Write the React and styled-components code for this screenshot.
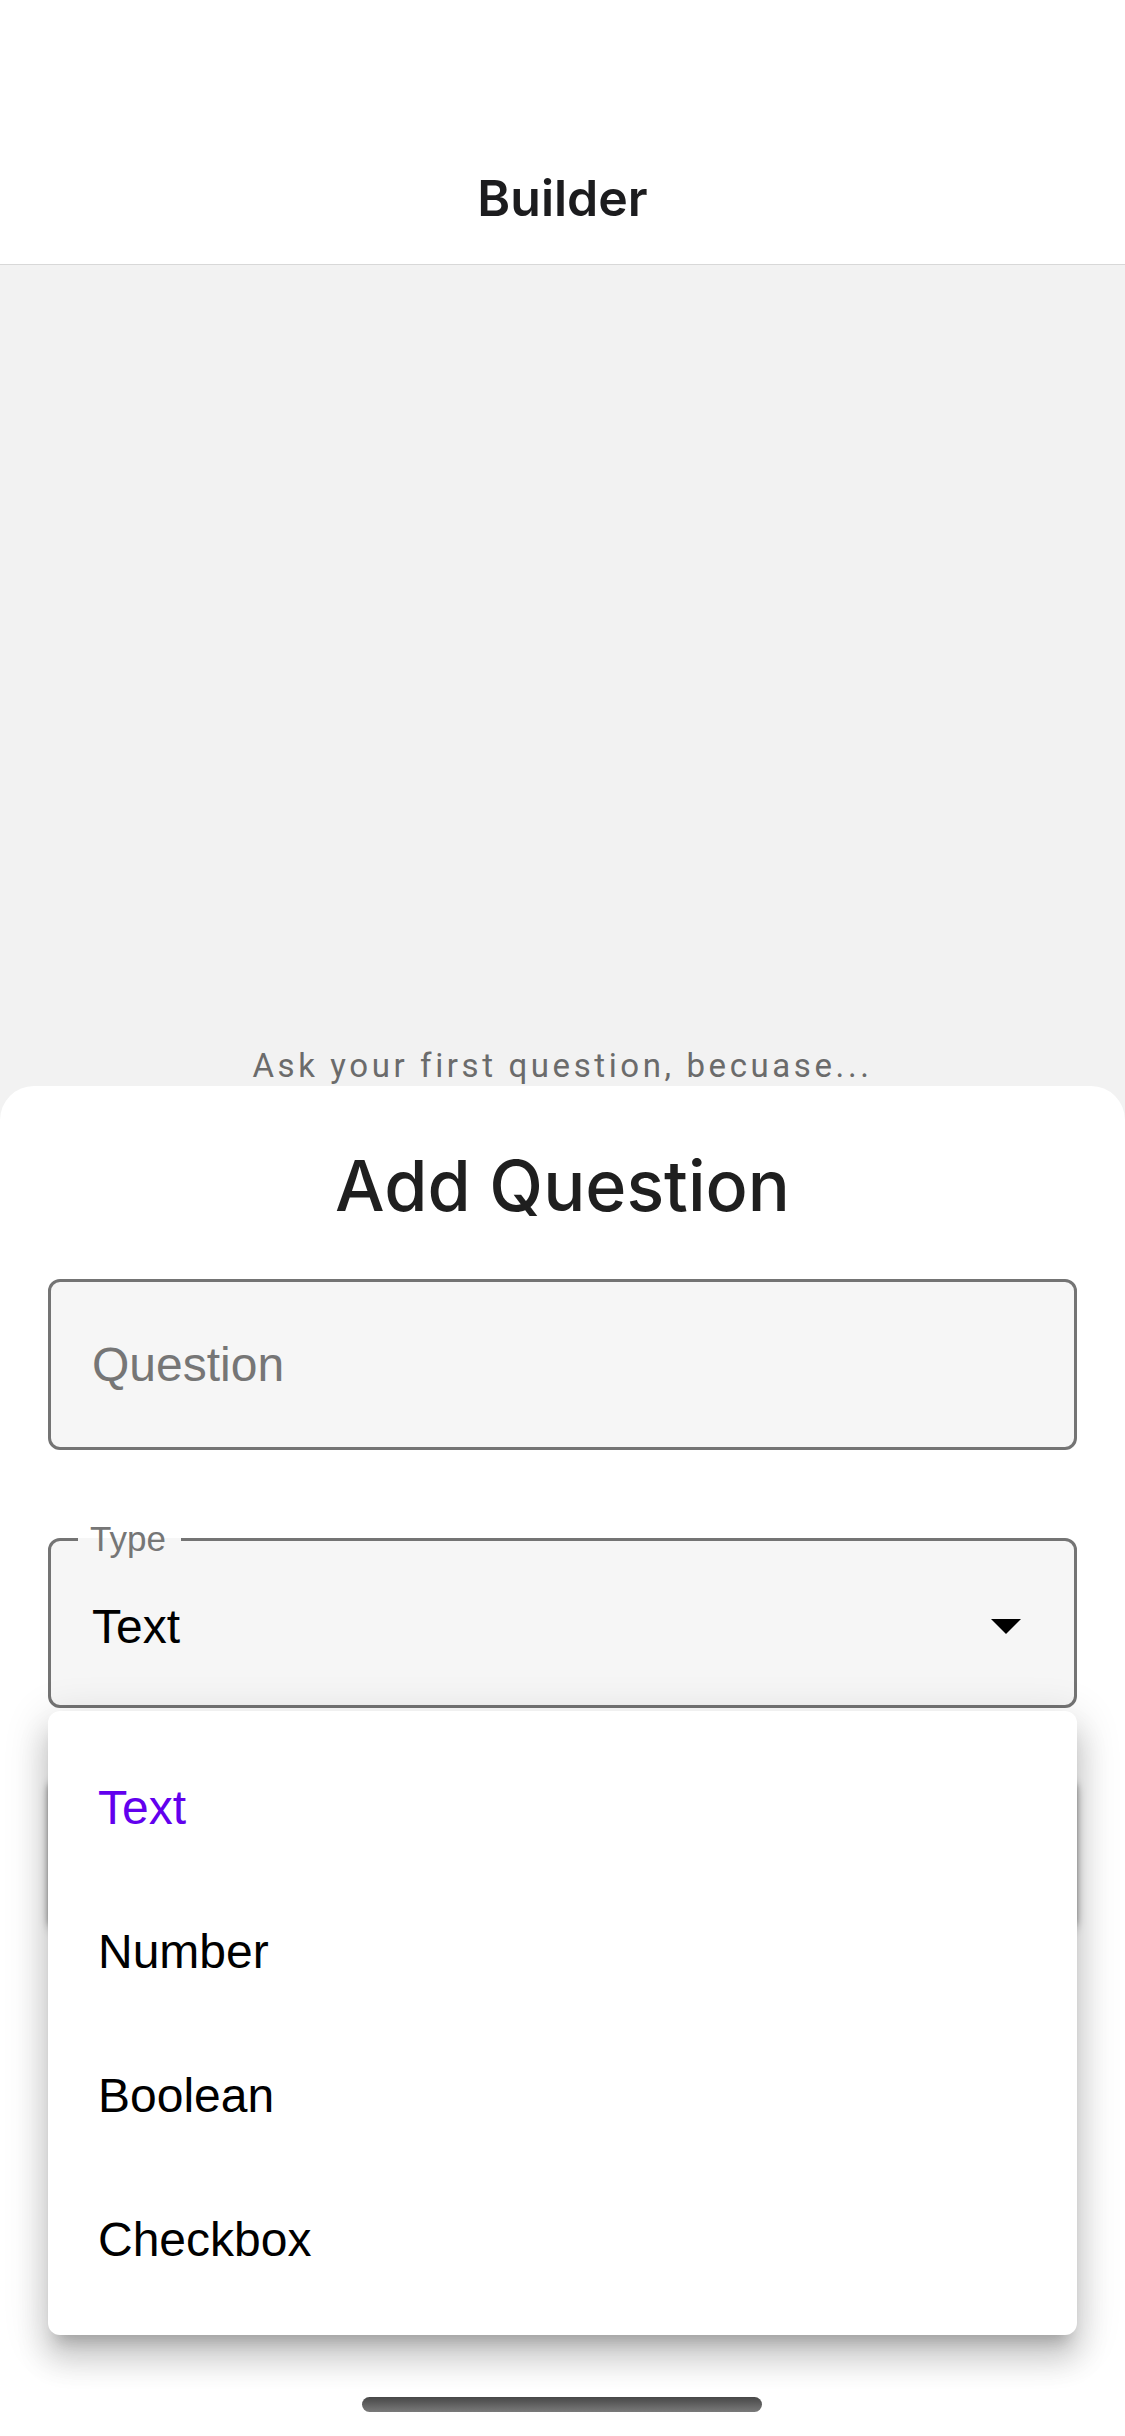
import React from "react";
import styled, { createGlobalStyle } from "styled-components";

const GlobalStyle = createGlobalStyle`
  html, body {
    margin: 0;
    padding: 0;
    background: #ffffff;
  }
  body {
    width: 1125px;
    height: 2436px;
    overflow: hidden;
    font-family: "Liberation Sans", Arial, sans-serif;
  }
  * { box-sizing: border-box; }
`;

const Screen = styled.div`
  position: relative;
  width: 1125px;
  height: 2436px;
  display: flex;
  flex-direction: column;
  overflow: hidden;
  background: #f2f2f2;
`;

const Header = styled.header`
  flex: 0 0 auto;
  height: 265px;
  padding-top: 132px;
  background: #ffffff;
  border-bottom: 1px solid #d8d8d8;
  display: flex;
  justify-content: center;
`;

const HeaderTitle = styled.h1`
  margin: 0;
  height: 132px;
  line-height: 132px;
  font-family: Inter, "Liberation Sans", sans-serif;
  font-weight: 600;
  font-size: 50px;
  color: #1c1c1e;
`;

const Body = styled.main`
  flex: 1 1 auto;
  display: flex;
  flex-direction: column;
  justify-content: flex-end;
  align-items: center;
  background: #f2f2f2;
`;

const EmptyHint = styled.p`
  margin: 0;
  font-family: Roboto, "Liberation Sans", sans-serif;
  font-size: 33px;
  line-height: 40px;
  letter-spacing: 3.6px;
  color: #6b6b6b;
`;

const Sheet = styled.section`
  position: relative;
  flex: 0 0 1350px;
  background: #ffffff;
  border-radius: 34px 34px 0 0;
  padding: 0 48px;
  display: flex;
  flex-direction: column;
`;

const SheetTitle = styled.h2`
  margin: 56px 0 0;
  text-align: center;
  font-family: Inter, "Liberation Sans", sans-serif;
  font-weight: 500;
  font-size: 70px;
  line-height: 88px;
  color: #1f1f1f;
`;

const TextField = styled.div`
  margin-top: 49px;
  height: 171px;
  border: 3px solid #747474;
  border-radius: 12px;
  background: #f6f6f6;
  display: flex;
  align-items: center;
  padding-left: 41px;
`;

const Placeholder = styled.span`
  font-size: 48px;
  color: #767676;
`;

const SelectField = styled.fieldset`
  margin: 71px 0 0;
  padding: 0;
  min-width: 0;
  border: 3px solid #747474;
  border-radius: 12px;
  background: #f6f6f6;
`;

const FieldLegend = styled.legend`
  margin-left: 27px;
  padding: 0 15px 0 12px;
  font-size: 35px;
  line-height: 36px;
  color: #767676;
`;

const SelectRow = styled.div`
  height: 148px;
  padding: 0 53px 10px 41px;
  display: flex;
  align-items: center;
  justify-content: space-between;
`;

const SelectValue = styled.span`
  font-size: 48px;
  color: #000000;
`;

const Caret = styled.svg`
  width: 30px;
  height: 15px;
  display: block;
`;

const SubmitButton = styled.button`
  margin-top: 68px;
  height: 152px;
  border: none;
  border-radius: 12px;
  background: #ffffff;
  box-shadow: 0 4px 10px rgba(0, 0, 0, 0.34), 0 2px 4px rgba(0, 0, 0, 0.2);
`;

const Menu = styled.ul`
  position: absolute;
  top: 625px;
  left: 48px;
  right: 48px;
  margin: 0;
  padding: 24px 0;
  list-style: none;
  background: #ffffff;
  border-radius: 12px;
  box-shadow: 0 15px 15px -9px rgba(0, 0, 0, 0.2),
    0 24px 30px 3px rgba(0, 0, 0, 0.14), 0 9px 42px 6px rgba(0, 0, 0, 0.12);
  z-index: 2;
`;

const MenuItem = styled.li`
  height: 144px;
  padding-left: 50px;
  display: flex;
  align-items: center;
  font-size: 48px;
  color: ${(p) => (p.$selected ? "#6200ee" : "#000000")};
`;

const HomeIndicator = styled.div`
  position: absolute;
  left: 362px;
  bottom: 24px;
  width: 400px;
  height: 15px;
  border-radius: 8px;
  background: linear-gradient(180deg, #474747 0%, #7a7a7a 100%);
  z-index: 3;
`;

const OPTIONS = ["Text", "Number", "Boolean", "Checkbox"];

export default function App() {
  const selected = "Text";
  return (
    <>
      <GlobalStyle />
      <Screen>
        <Header>
          <HeaderTitle>Builder</HeaderTitle>
        </Header>
        <Body>
          <EmptyHint>Ask your first question, becuase...</EmptyHint>
        </Body>
        <Sheet>
          <SheetTitle>Add Question</SheetTitle>
          <TextField>
            <Placeholder>Question</Placeholder>
          </TextField>
          <SelectField>
            <FieldLegend>Type</FieldLegend>
            <SelectRow>
              <SelectValue>{selected}</SelectValue>
              <Caret viewBox="0 0 30 15">
                <polygon points="0,0 30,0 15,15" fill="#000" />
              </Caret>
            </SelectRow>
          </SelectField>
          <SubmitButton aria-label="Save" />
          <Menu>
            {OPTIONS.map((o) => (
              <MenuItem key={o} $selected={o === selected}>
                {o}
              </MenuItem>
            ))}
          </Menu>
        </Sheet>
        <HomeIndicator />
      </Screen>
    </>
  );
}
